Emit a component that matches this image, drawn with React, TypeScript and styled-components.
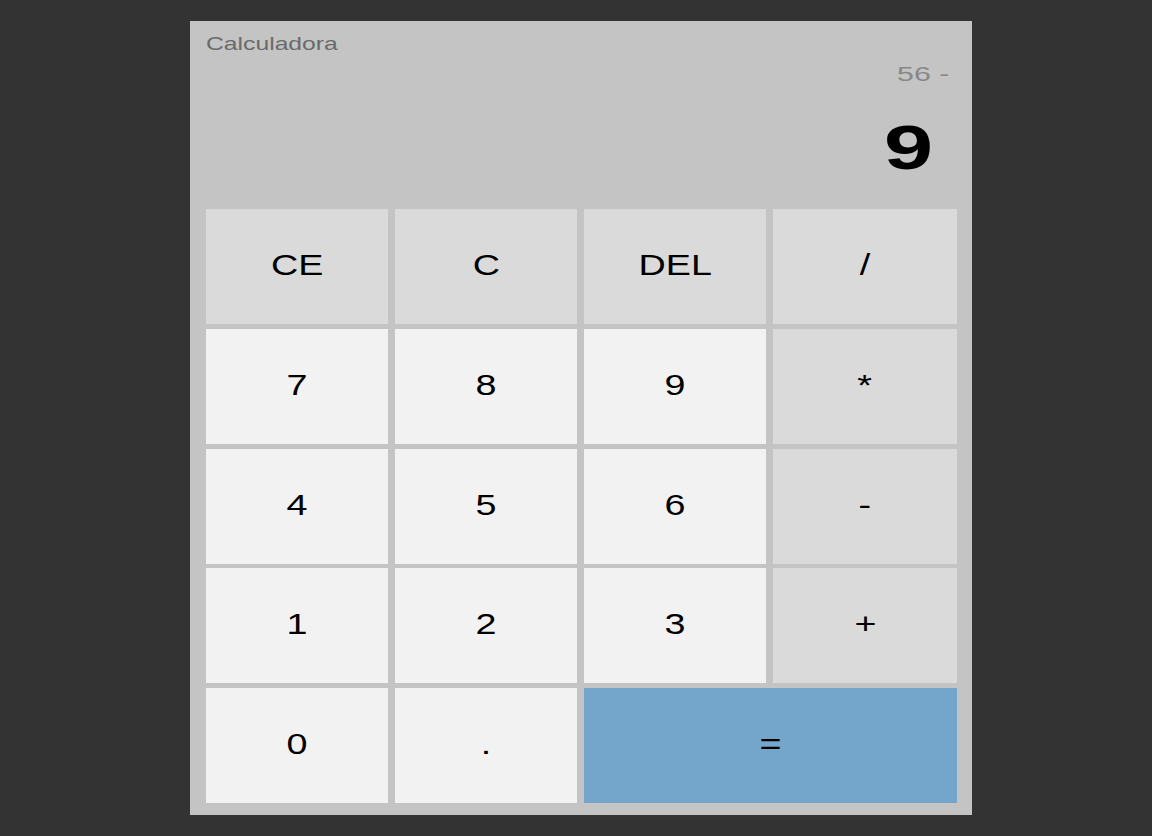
import React from "react";
import styled, { createGlobalStyle } from "styled-components";

const GlobalStyle = createGlobalStyle`
  html, body {
    margin: 0;
    padding: 0;
    background: #333333;
    font-family: "Liberation Sans", Arial, sans-serif;
  }
  #root {
    min-height: 100vh;
  }
`;

const Page = styled.div`
  min-height: 836px;
  padding: 21px 0 0 190px;
  box-sizing: border-box;
`;

const Panel = styled.div`
  width: 782px;
  height: 794px;
  box-sizing: border-box;
  background: #c4c4c4;
  padding: 12px 15px 12px 16px;
  display: flex;
  flex-direction: column;
`;

const Display = styled.div`
  height: 176px;
  display: flex;
  flex-direction: column;
`;

const Title = styled.div`
  font-size: 19px;
  line-height: 22px;
  color: #6a6a6a;
  align-self: flex-start;
`;

const Stretch = styled.span<{ $sx: number; $origin?: string }>`
  display: inline-block;
  transform: scaleX(${(p) => p.$sx});
  transform-origin: ${(p) => p.$origin || "center"};
  white-space: pre;
`;

const Previous = styled.div`
  margin-top: 7px;
  font-size: 20px;
  line-height: 24px;
  color: #888888;
  align-self: flex-end;
  margin-right: 8px;
`;

const Current = styled.div`
  margin-top: 26px;
  font-size: 63px;
  font-weight: bold;
  line-height: 70px;
  color: #000000;
  align-self: flex-end;
  margin-right: 24px;
`;

const Keys = styled.div`
  height: 594px;
  display: grid;
  grid-template-columns: 182px 182px 182px 184px;
  grid-template-rows: repeat(5, 1fr);
  column-gap: 7px;
  row-gap: 4.75px;
`;

type Kind = "num" | "op" | "eq";

const Key = styled.button<{ $kind: Kind; $span?: number }>`
  border: none;
  margin: 0;
  padding: 0 0 2px;
  display: flex;
  align-items: center;
  justify-content: center;
  font-family: "Liberation Sans", Arial, sans-serif;
  font-size: 29px;
  color: #000;
  cursor: pointer;
  grid-column: span ${(p) => p.$span || 1};
  background: ${(p) =>
    p.$kind === "num" ? "#f2f2f2" : p.$kind === "op" ? "#dadada" : "#74a5cb"};
`;

const keys: { label: string; kind: Kind; span?: number }[] = [
  { label: "CE", kind: "op" },
  { label: "C", kind: "op" },
  { label: "DEL", kind: "op" },
  { label: "/", kind: "op" },
  { label: "7", kind: "num" },
  { label: "8", kind: "num" },
  { label: "9", kind: "num" },
  { label: "*", kind: "op" },
  { label: "4", kind: "num" },
  { label: "5", kind: "num" },
  { label: "6", kind: "num" },
  { label: "-", kind: "op" },
  { label: "1", kind: "num" },
  { label: "2", kind: "num" },
  { label: "3", kind: "num" },
  { label: "+", kind: "op" },
  { label: "0", kind: "num" },
  { label: ".", kind: "num" },
  { label: "=", kind: "eq", span: 2 },
];

export default function App() {
  return (
    <>
      <GlobalStyle />
      <Page>
        <Panel>
          <Display>
            <Title>
              <Stretch $sx={1.3} $origin="left">Calculadora</Stretch>
            </Title>
            <Previous>
              <Stretch $sx={1.52} $origin="right">56 -</Stretch>
            </Previous>
            <Current>
              <Stretch $sx={1.4} $origin="right">9</Stretch>
            </Current>
          </Display>
          <Keys>
            {keys.map((k) => (
              <Key key={k.label} $kind={k.kind} $span={k.span}>
                <Stretch $sx={1.3}>{k.label}</Stretch>
              </Key>
            ))}
          </Keys>
        </Panel>
      </Page>
    </>
  );
}
